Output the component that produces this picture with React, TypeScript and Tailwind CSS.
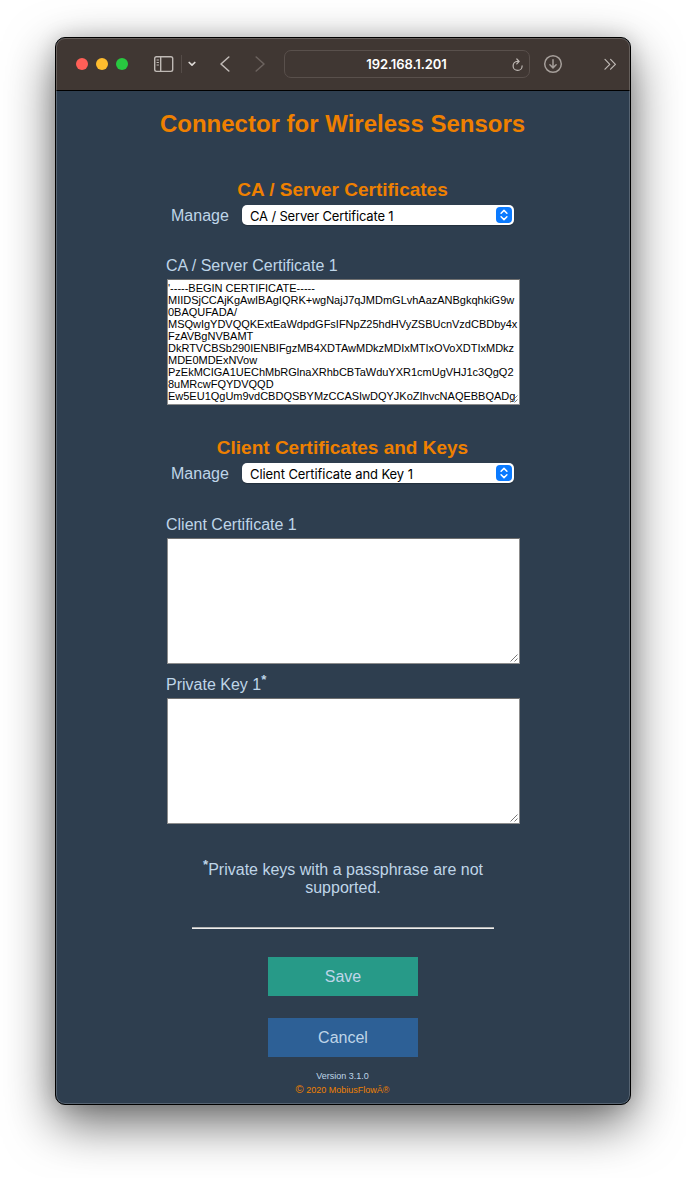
import type { ReactNode } from "react";

const certificate = [
  "'-----BEGIN CERTIFICATE-----",
  "MIIDSjCCAjKgAwIBAgIQRK+wgNajJ7qJMDmGLvhAazANBgkqhkiG9w",
  "0BAQUFADA/",
  "MSQwIgYDVQQKExtEaWdpdGFsIFNpZ25hdHVyZSBUcnVzdCBDby4x",
  "FzAVBgNVBAMT",
  "DkRTVCBSb290IENBIFgzMB4XDTAwMDkzMDIxMTIxOVoXDTIxMDkz",
  "MDE0MDExNVow",
  "PzEkMCIGA1UEChMbRGlnaXRhbCBTaWduYXR1cmUgVHJ1c3QgQ2",
  "8uMRcwFQYDVQQD",
  "Ew5EU1QgUm9vdCBDQSBYMzCCASIwDQYJKoZIhvcNAQEBBQADg",
].join("\n");

function Toolbar() {
  return (
    <header className="flex h-[53px] items-center border-b border-black bg-[#403733] pl-5 text-[#bfb9b5]">
      <div className="flex gap-2">
        <span className="size-3 rounded-full bg-[#ff5f57]" />
        <span className="size-3 rounded-full bg-[#febc2e]" />
        <span className="size-3 rounded-full bg-[#28c840]" />
      </div>
      <svg className="ml-[25px] shrink-0" width="21" height="18" viewBox="0 0 21 18" fill="none" stroke="currentColor" strokeWidth="1.4">
        <rect x="1.7" y="1.7" width="18" height="14.7" rx="1.8" />
        <path d="M7.7 2v14" />
        <path d="M3.6 5h2.3M3.6 7.5h2.3M3.6 10h2.3" strokeWidth="1" />
      </svg>
      <span className="ml-[7px] h-[18px] w-px bg-[#554c48]" />
      <svg className="ml-[5px] shrink-0" width="10" height="8" viewBox="0 0 10 8" fill="none" stroke="#ddd9d6" strokeWidth="1.7" strokeLinecap="round" strokeLinejoin="round">
        <path d="M2.2 2.5 5 5.2l2.8-2.7" />
      </svg>
      <svg className="ml-[22px] shrink-0" width="12" height="18" viewBox="0 0 12 18" fill="none" stroke="currentColor" strokeWidth="1.6" strokeLinecap="round" strokeLinejoin="round">
        <path d="M9.8 2 2 9l7.8 7" />
      </svg>
      <svg className="ml-[23px] shrink-0" width="12" height="18" viewBox="0 0 12 18" fill="none" stroke="#6b625e" strokeWidth="1.6" strokeLinecap="round" strokeLinejoin="round">
        <path d="M2.2 2 10 9l-7.8 7" />
      </svg>
      <div className="ml-[18px] flex h-7 w-[246px] items-center rounded-[7px] border border-[#59504c]">
        <span className="w-[17px]" />
        <span className="mt-px flex-1 text-center font-['Inter',sans-serif] text-[13px] font-semibold tracking-[-0.1px] text-white">192.168.1.201</span>
        <svg className="mr-[5px] mt-[2px]" width="13" height="14" viewBox="0 0 13 14" fill="none" stroke="currentColor" strokeWidth="1.2" strokeLinecap="round" strokeLinejoin="round">
          <path d="M7.8 3.4H6.5a4.5 4.5 0 1 0 4.6 4.5M5.8 1l2.4 2.4-2.4 2.4" />
        </svg>
      </div>
      <svg className="ml-[13px] shrink-0" width="20" height="20" viewBox="0 0 20 20" fill="none" stroke="#a59e9a" strokeWidth="1.5" strokeLinecap="round" strokeLinejoin="round">
        <circle cx="10" cy="10" r="8.3" />
        <path d="M10 5.8v8M6.9 10.8l3.1 3.1 3.1-3.1" />
      </svg>
      <svg className="ml-10 shrink-0" width="14" height="14" viewBox="0 0 14 14" fill="none" stroke="currentColor" strokeWidth="1.2" strokeLinecap="round" strokeLinejoin="round">
        <path d="m2 2.4 4.8 4.9L2 12.2M7.6 2.4l4.8 4.9-4.8 4.9" />
      </svg>
    </header>
  );
}

function ManageRow({ value, textClass }: { value: string; textClass: string }) {
  return (
    <div className="ml-[115px] mt-[5px] flex h-5 items-center">
      <span className="mt-[2px] w-[71px] text-base leading-[18px]">Manage</span>
      <button className="flex h-5 w-[272px] items-center justify-between rounded-[5px] bg-white pl-2 pr-[2px] shadow-[0_1px_1px_rgba(0,0,0,0.25)]">
        <span className={`mt-px whitespace-nowrap font-['Inter',sans-serif] text-[13px] leading-[18px] text-black ${textClass}`}>{value}</span>
        <svg width="16" height="16" viewBox="0 0 16 16" fill="none">
          <rect width="16" height="16" rx="4" fill="#0a7aff" />
          <path d="M5.1 6.2 8 3.4l2.9 2.8M5.1 9.8 8 12.6l2.9-2.8" stroke="white" strokeWidth="1.5" strokeLinecap="round" strokeLinejoin="round" />
        </svg>
      </button>
    </div>
  );
}

function Field({ label, className, children, value = "" }: { label: ReactNode; className: string; children?: ReactNode; value?: string }) {
  return (
    <div className={`ml-[110px] ${className}`}>
      <div className="h-[18px] text-base leading-[18px]">{label}{children}</div>
      <div className="relative ml-px mt-1 h-[126px] w-[353px]">
        <textarea
          defaultValue={value}
          spellCheck={false}
          wrap="off"
          className="block h-full w-full resize-none overflow-hidden border border-[#8c8c8c] border-t-[#707070] bg-white pt-[2px] font-['Liberation_Sans',sans-serif] text-[11px] leading-[12px] tracking-[-0.01px] text-black outline-none"
        />
        <svg className="absolute bottom-[2px] right-[2px]" width="8" height="8" viewBox="0 0 8 8" stroke="#555" strokeWidth="0.8">
          <path d="M.5 7.5l7-7M4.5 7.5l3-3" />
        </svg>
      </div>
    </div>
  );
}

const Star = () => <sup className="relative -top-[6px] align-baseline text-[13.3px] font-semibold leading-none">*</sup>;

export default function App() {
  return (
    <div className="h-[1178px] w-[686px] overflow-hidden bg-white pl-[55px] pt-[37px] font-['Liberation_Sans',Arial,sans-serif]">
      <div className="h-[1068px] w-[576px] rounded-[10px] border border-black bg-[#2e3e4f] shadow-[0_18px_50px_rgba(0,0,0,0.6),0_0_20px_rgba(0,0,0,0.15)]">
        <div className="relative flex h-full flex-col overflow-hidden rounded-[9px] text-[#bfd5e8]">
          <Toolbar />
          <h1 className="mt-[19px] text-center text-2xl font-bold leading-[27px] text-[#ef8000]"><span className="mr-px">Connector for Wireless Sensors</span></h1>
          <h3 className="mt-[42px] text-center text-[19px] font-bold leading-[21px] text-[#ef8000]"><span className="mr-px">CA / Server Certificates</span></h3>
          <ManageRow value="CA / Server Certificate 1" textClass="tracking-[-0.16px]" />
          <Field label="CA / Server Certificate 1" className="mt-8" value={certificate} />
          <h3 className="mt-8 text-center text-[19px] font-bold leading-[21px] text-[#ef8000]"><span className="mr-px">Client Certificates and Keys</span></h3>
          <ManageRow value="Client Certificate and Key 1" textClass="tracking-[-0.08px]" />
          <Field label="Client Certificate 1" className="mt-[33px]" />
          <Field label="Private Key 1" className="mt-3"><Star /></Field>
          <p className="mt-[37px] text-center text-base leading-[18px]">
            <Star />Private keys with a passphrase are not<br />supported.
          </p>
          <hr className="mx-auto mt-[30px] h-[2px] w-[302px] border-b border-t border-b-[#eeeeee] border-t-[#b5b5b5]" />
          <button className="mx-auto mt-7 h-[39px] w-[150px] bg-[#279a88] text-base">Save</button>
          <button className="mx-auto mt-[22px] h-[39px] w-[150px] bg-[#2d6096] text-base">Cancel</button>
          <div className="mt-[12px] text-center text-[9px] leading-[14px]">
            <div className="mr-px">Version 3.1.0</div>
            <div className="mr-px text-[#ef8000]"><span className="text-[11px] leading-none">©</span> 2020 MobiusFlowÂ®</div>
          </div>
          <div className="pointer-events-none absolute inset-0 rounded-[9px] border border-white/20" />
        </div>
      </div>
    </div>
  );
}
